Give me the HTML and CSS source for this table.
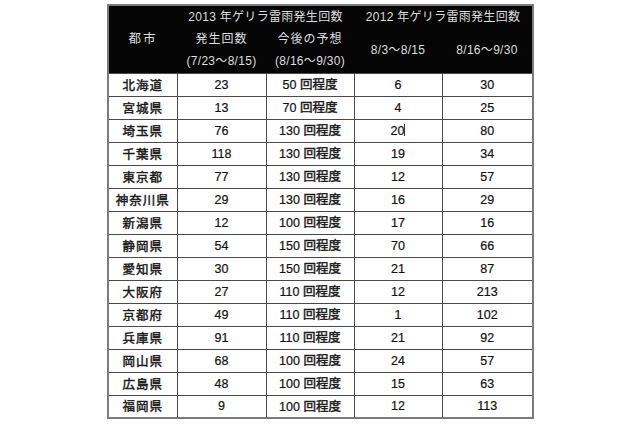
FILE: index.html
```html
<!DOCTYPE html>
<html lang="ja">
<head>
<meta charset="utf-8">
<link rel="stylesheet" href="styles.css">
</head>
<body>
<div class="page">
<table class="tbl">
  <colgroup>
    <col class="c1"><col class="c2"><col class="c3"><col class="c4"><col class="c5">
  </colgroup>
  <thead>
    <tr class="h1">
      <th rowspan="3" class="city">都市</th>
      <th colspan="2">2013 年ゲリラ雷雨発生回数</th>
      <th colspan="2">2012 年ゲリラ雷雨発生回数</th>
    </tr>
    <tr class="h2">
      <th class="sp">発生回数</th>
      <th class="sp">今後の予想</th>
      <th rowspan="2">8/3～8/15</th>
      <th rowspan="2">8/16～9/30</th>
    </tr>
    <tr class="h3">
      <th>(7/23～8/15)</th>
      <th>(8/16～9/30)</th>
    </tr>
  </thead>
  <tbody>
    <tr><td class="name">北海道</td><td>23</td><td>50 <span class="j">回程度</span></td><td>6</td><td>30</td></tr>
    <tr><td class="name">宮城県</td><td>13</td><td>70 <span class="j">回程度</span></td><td>4</td><td>25</td></tr>
    <tr><td class="name">埼玉県</td><td>76</td><td>130 <span class="j">回程度</span></td><td>20<span class="caret"></span></td><td>80</td></tr>
    <tr><td class="name">千葉県</td><td>118</td><td>130 <span class="j">回程度</span></td><td>19</td><td>34</td></tr>
    <tr><td class="name">東京都</td><td>77</td><td>130 <span class="j">回程度</span></td><td>12</td><td>57</td></tr>
    <tr><td class="name">神奈川県</td><td>29</td><td>130 <span class="j">回程度</span></td><td>16</td><td>29</td></tr>
    <tr><td class="name">新潟県</td><td>12</td><td>100 <span class="j">回程度</span></td><td>17</td><td>16</td></tr>
    <tr><td class="name">静岡県</td><td>54</td><td>150 <span class="j">回程度</span></td><td>70</td><td>66</td></tr>
    <tr><td class="name">愛知県</td><td>30</td><td>150 <span class="j">回程度</span></td><td>21</td><td>87</td></tr>
    <tr><td class="name">大阪府</td><td>27</td><td>110 <span class="j">回程度</span></td><td>12</td><td>213</td></tr>
    <tr><td class="name">京都府</td><td>49</td><td>110 <span class="j">回程度</span></td><td>1</td><td>102</td></tr>
    <tr><td class="name">兵庫県</td><td>91</td><td>110 <span class="j">回程度</span></td><td>21</td><td>92</td></tr>
    <tr><td class="name">岡山県</td><td>68</td><td>100 <span class="j">回程度</span></td><td>24</td><td>57</td></tr>
    <tr><td class="name">広島県</td><td>48</td><td>100 <span class="j">回程度</span></td><td>15</td><td>63</td></tr>
    <tr><td class="name">福岡県</td><td>9</td><td>100 <span class="j">回程度</span></td><td>12</td><td>113</td></tr>
  </tbody>
</table>
</div>
</body>
</html>
```

FILE: styles.css
```css
html, body {
  margin: 0;
  padding: 0;
  background: #ffffff;
}

.page {
  padding: 4px 0 0 107px;
}

.tbl {
  border-collapse: collapse;
  table-layout: fixed;
  width: 425px;
  font-family: "Liberation Sans", "Noto Sans CJK JP", sans-serif;
  font-size: 12.5px;
  color: #111;
  border: 2px solid #7c7c7c;
}

.c1 { width: 69px; }
.c2 { width: 89px; }
.c3 { width: 88px; }
.c4 { width: 88px; }
.c5 { width: 91px; }

.tbl thead th {
  background: #050505;
  color: #dedede;
  font-weight: normal;
  font-size: 12px;
  letter-spacing: 0.3px;
  padding: 0 0 4px 0;
  text-align: center;
  vertical-align: middle;
}

.tbl thead th.sp {
  letter-spacing: 1px;
}

.tbl .h1 { height: 23px; }
.tbl .h2 { height: 22px; }
.tbl .h3 { height: 23px; }

.tbl thead .city {
  letter-spacing: 2px;
  font-size: 12.5px;
}

.tbl tbody tr {
  height: 23px;
}

.tbl tbody td {
  border: 1px solid #4a4a4a;
  padding: 0;
  text-align: center;
  vertical-align: middle;
  line-height: 14px;
  -webkit-text-stroke: 0.2px #111;
}

.tbl tbody td.name {
  font-family: "Noto Sans CJK JP", sans-serif;
  font-weight: normal;
  letter-spacing: 1px;
  color: #1a1a1a;
  -webkit-text-stroke: 0.45px #1a1a1a;
}

.j {
  font-family: "Noto Sans CJK JP", sans-serif;
  font-weight: normal;
  color: #1a1a1a;
  -webkit-text-stroke: 0.45px #1a1a1a;
}

.caret {
  display: inline-block;
  width: 1px;
  height: 12px;
  background: #333;
  vertical-align: -1px;
  -webkit-text-stroke: 0;
}
```
